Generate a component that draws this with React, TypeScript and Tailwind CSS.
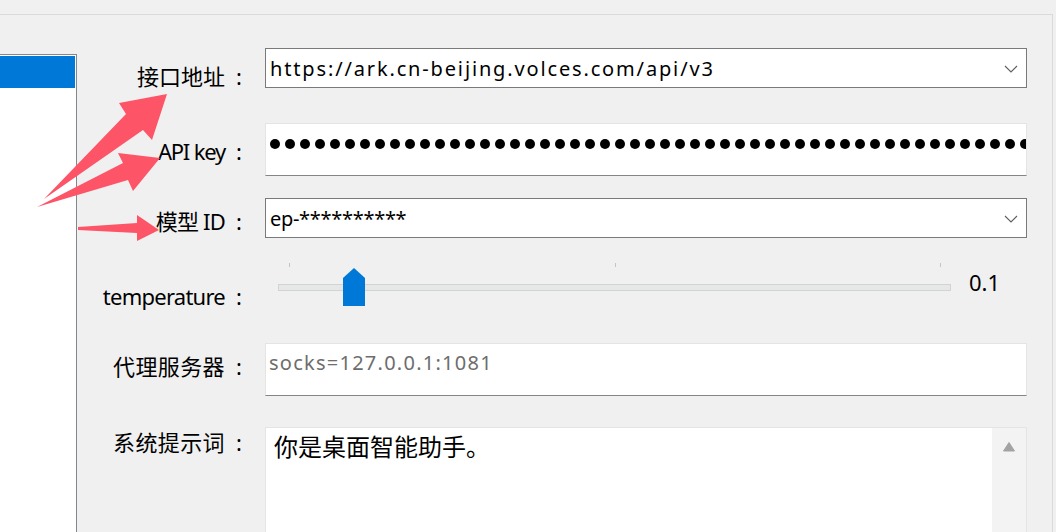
import { useState } from "react";

const FONT = "font-['Noto_Sans','Noto_Sans_CJK_SC',sans-serif]";

function Chevron() {
  return (
    <svg width="14" height="8" viewBox="0 0 14 8" className="shrink-0">
      <path d="M1 1 L7 7 L13 1" fill="none" stroke="#5f5f5f" strokeWidth="1.1" />
    </svg>
  );
}

function Combo({ value, tracking }: { value: string; tracking: string }) {
  return (
    <div className="flex h-[40px] w-[762px] items-start border border-[#7a7a7a] bg-white pl-[4px] pr-[8px]">
      <span className={`flex-1 truncate pt-[6px] text-[20px] leading-[28px] text-black ${tracking}`}>{value}</span>
      <div className="pt-[16px]">
        <Chevron />
      </div>
    </div>
  );
}

function Label({ text, pt, tracking = "" }: { text: string; pt: string; tracking?: string }) {
  return (
    <div className={`w-[188px] shrink-0 pr-[18px] text-right text-[22px] leading-[30px] text-black ${pt}`}>
      <span className={tracking}>{text}</span>
      <span className="inline-block w-[22px] pr-[5px] text-right">:</span>
    </div>
  );
}

function Slider({ value }: { value: number }) {
  const travel = 673 - 22;
  return (
    <div className="relative w-[673px]">
      <div className="flex h-[4px] justify-between pl-[11px] pr-[10px]">
        <div className="w-px bg-[#c4c4c4]" />
        <div className="w-px bg-[#c4c4c4]" />
        <div className="w-px bg-[#c4c4c4]" />
      </div>
      <div className="mt-[17px] h-[7px] border border-[#d2d4d4] bg-[#e6e7e7]" />
      <svg
        width="22"
        height="38"
        viewBox="0 0 22 38"
        className="absolute top-[5px]"
        style={{ left: Math.round(value * travel) }}
      >
        <polygon points="0,10 11,0 22,10 22,38 0,38" fill="#0078d7" />
      </svg>
    </div>
  );
}

export default function App() {
  const [temperature] = useState(0.1);
  const dots = Array.from({ length: 51 });

  return (
    <div className={`relative h-[532px] w-[1056px] overflow-hidden bg-[#f0f0f0] ${FONT}`}>
      <div className="h-[14px]" />
      <div className="flex h-[518px] w-[1053px] border-t border-r border-[#dadada]">
        <aside className="mt-[39px] w-[77px] shrink-0 border-t border-r border-[#828790] bg-white pt-px pr-px">
          <div className="h-[32px] bg-[#0078d7]" />
        </aside>

        <main className="flex flex-1 flex-col pt-[33px]">
          {/* 接口地址 */}
          <div className="flex h-[40px] shrink-0 items-start">
            <Label text="接口地址" pt="pt-[13px]" />
            <Combo value="https://ark.cn-beijing.volces.com/api/v3" tracking="tracking-[1.85px]" />
          </div>

          {/* API key */}
          <div className="mt-[35px] flex h-[53px] shrink-0 items-start">
            <Label text="API key" pt="pt-[13px]" tracking="tracking-[-1.2px]" />
            <div className="h-[53px] w-[762px] overflow-hidden border border-[#e4e4e4] border-b-[#858585] bg-white pl-[4px] pt-[15px]">
              <div className="flex gap-[5px]">
                {dots.map((_, i) => (
                  <div key={i} className="h-[10px] w-[10px] shrink-0 rounded-full bg-black" />
                ))}
              </div>
            </div>
          </div>

          {/* 模型 ID */}
          <div className="mt-[22px] flex h-[40px] shrink-0 items-start">
            <Label text="模型 ID" pt="pt-[8px]" tracking="tracking-[-0.8px]" />
            <Combo value="ep-**********" tracking="tracking-[-0.3px]" />
          </div>

          {/* temperature */}
          <div className="flex h-[105px] shrink-0 items-start">
            <Label text="temperature" pt="pt-[43px]" tracking="tracking-[-0.75px]" />
            <div className="pl-[13px] pt-[25px]">
              <Slider value={temperature} />
            </div>
            <div className="pl-[18px] pt-[29px] text-[22px] leading-[30px] text-black">{temperature}</div>
          </div>

          {/* 代理服务器 */}
          <div className="flex h-[53px] shrink-0 items-start">
            <Label text="代理服务器" pt="pt-[8px]" tracking="tracking-[0.4px]" />
            <div className="h-[53px] w-[762px] border border-[#e4e4e4] border-b-[#858585] bg-white pl-[3px] pt-[5px] text-[20px] leading-[28px] tracking-[1.25px] text-[#6d6d6d]">
              socks=127.0.0.1:1081
            </div>
          </div>

          {/* 系统提示词 */}
          <div className="mt-[31px] flex h-[140px] shrink-0 items-start">
            <Label text="系统提示词" pt="pt-0" tracking="tracking-[0.4px]" />
            <div className="flex h-[140px] w-[762px] border border-[#e4e4e4] bg-white">
              <div className="flex-1 pl-[8px] pt-[3px] text-[24px] leading-[32px] text-black">你是桌面智能助手。</div>
              <div className="flex w-[34px] justify-center bg-[#f3f3f3] pt-[14px]">
                <svg width="12" height="10" viewBox="0 0 12 10">
                  <path d="M6 0.5 L11.5 9 L0.5 9 Z" fill="#a3a3a3" strokeLinejoin="round" stroke="#a3a3a3" />
                </svg>
              </div>
            </div>
          </div>
        </main>
      </div>

      {/* annotation arrows */}
      <svg className="pointer-events-none absolute inset-0" width="1056" height="532" viewBox="0 0 1056 532">
        <g fill="#fe5468">
          <polygon points="44,199 126,114 119,103 167,94 152,140 143,130" />
          <polygon points="37,207 123,163 118,153 160,158 133,191 128,180" />
          <polygon points="78,227 137,223 137,215 159,230 137,241 137,233 78,230" />
        </g>
      </svg>
    </div>
  );
}
